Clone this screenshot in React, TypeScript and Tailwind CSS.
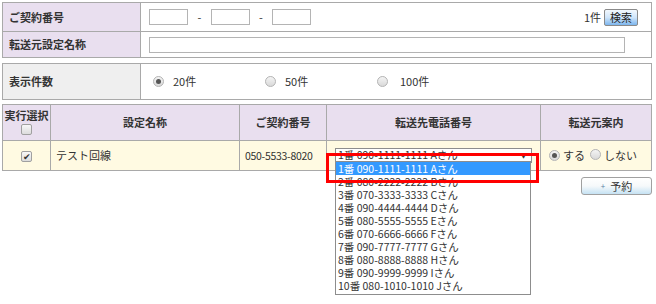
import React from 'react';

const phones = [
  '1番 090-1111-1111 Aさん',
  '2番 080-2222-2222 Bさん',
  '3番 070-3333-3333 Cさん',
  '4番 090-4444-4444 Dさん',
  '5番 080-5555-5555 Eさん',
  '6番 070-6666-6666 Fさん',
  '7番 090-7777-7777 Gさん',
  '8番 080-8888-8888 Hさん',
  '9番 090-9999-9999 Iさん',
  '10番 080-1010-1010 Jさん',
];

function Radio({ checked }: { checked?: boolean }) {
  return (
    <span className="inline-flex items-center justify-center w-[11px] h-[11px] rounded-full border border-[#b5b5b5] bg-gradient-to-b from-[#f4f4f4] to-[#d9d9d9]">
      {checked && <span className="w-[5px] h-[5px] rounded-full bg-[#555]" />}
    </span>
  );
}

function Check({ checked }: { checked?: boolean }) {
  return (
    <span className="inline-flex items-center justify-center w-[11px] h-[11px] rounded-[2px] border border-[#a0a0a0] bg-gradient-to-b from-[#f8f8f8] to-[#dcdcdc] text-[9px] leading-none text-[#333]">
      {checked && '✔'}
    </span>
  );
}

const box = 'h-[16px] border border-[#b4b4b4] bg-white';

export default function App() {
  return (
    <div className="relative w-[656px] h-[304px] bg-white pt-[2px] pl-[2px] text-[11px] text-[#333] font-['Noto_Sans_CJK_JP',sans-serif] overflow-hidden">
      <table className="w-[650px] border-collapse border border-[#a9a9a9]">
        <tbody>
          <tr className="h-[29px]">
            <th className="w-[138px] bg-[#e9dfef] border border-[#a9a9a9] text-left pl-[6px] font-bold">ご契約番号</th>
            <td className="border border-[#a9a9a9] pl-[8px] pr-[13px]">
              <div className="flex items-center">
                <div className={`${box} w-[39px]`} />
                <span className="w-[23px] text-center">-</span>
                <div className={`${box} w-[39px]`} />
                <span className="w-[22px] text-center">-</span>
                <div className={`${box} w-[39px]`} />
                <span className="ml-auto mr-[3px]">1件</span>
                <button className="h-[17px] w-[34px] rounded-[2px] border border-[#8a8a8a] bg-gradient-to-b from-[#f2f8fd] via-[#cfe5fa] to-[#7db6ee] text-[11px] leading-none text-[#222]">検索</button>
              </div>
            </td>
          </tr>
          <tr className="h-[26px]">
            <th className="bg-[#e9dfef] border border-[#a9a9a9] text-left pl-[6px] font-bold">転送元設定名称</th>
            <td className="border border-[#a9a9a9] pl-[8px]">
              <div className={`${box} w-[476px]`} />
            </td>
          </tr>
        </tbody>
      </table>

      <table className="mt-[5px] w-[650px] border-collapse border border-[#a9a9a9]">
        <tbody>
          <tr className="h-[36px]">
            <th className="w-[138px] bg-[#efefef] border border-[#a9a9a9] text-left pl-[6px] font-bold">表示件数</th>
            <td className="border border-[#a9a9a9] pl-[12px]">
              <div className="flex items-center">
                <span className="flex items-center w-[112px]"><Radio checked /><span className="ml-[9px]">20件</span></span>
                <span className="flex items-center w-[112px]"><Radio /><span className="ml-[9px]">50件</span></span>
                <span className="flex items-center"><Radio /><span className="ml-[12px]">100件</span></span>
              </div>
            </td>
          </tr>
        </tbody>
      </table>

      <table className="mt-[4px] w-[650px] border-collapse border border-[#a9a9a9]">
        <tbody>
          <tr className="h-[36px] bg-[#e9dfef] font-bold">
            <th className="w-[48px] border border-[#a9a9a9] leading-[14px] align-top pt-[3px]">
              <div>実行選択</div>
              <div className="mt-[1px]"><Check /></div>
            </th>
            <th className="w-[189px] border border-[#a9a9a9]">設定名称</th>
            <th className="w-[87px] border border-[#a9a9a9]">ご契約番号</th>
            <th className="w-[214px] border border-[#a9a9a9]">転送先電話番号</th>
            <th className="border border-[#a9a9a9]">転送元案内</th>
          </tr>
          <tr className="h-[30px] bg-[#fffae2]">
            <td className="border border-[#a9a9a9] text-center"><Check checked /></td>
            <td className="border border-[#a9a9a9] pl-[5px]">テスト回線</td>
            <td className="border border-[#a9a9a9] pl-[5px] text-[10.5px] tracking-[-0.3px]">050-5533-8020</td>
            <td className="border border-[#a9a9a9] pl-[8px]">
              <div className="flex items-center h-[15px] w-[197px] border border-[#8d8d8d] bg-white pl-[2px] pr-[4px] text-[10.5px] leading-none">
                <span>1番 090-1111-1111 Aさん</span>
                <span className="ml-auto text-[7px]">▼</span>
              </div>
            </td>
            <td className="border border-[#a9a9a9] pl-[8px]">
              <div className="flex items-center">
                <Radio checked /><span className="ml-[3px]">する</span>
                <span className="ml-[5px]"><Radio /></span><span className="ml-[3px]">しない</span>
              </div>
            </td>
          </tr>
        </tbody>
      </table>

      <div className="flex justify-end mt-[6px] w-[650px]">
        <button className="flex items-center justify-center gap-[5px] h-[18px] w-[71px] rounded-[3px] border border-[#a0a0a0] bg-gradient-to-b from-white via-[#f6f9fb] to-[#c5e2f3] text-[11px] leading-none text-[#333]">
          <span className="text-[8px] text-[#5b7fa6]">+</span>
          <span>予約</span>
        </button>
      </div>

      <div className="absolute left-[335px] top-[161px] w-[196px] border border-[#8d8d8d] bg-white pb-[2px] text-[10.5px] leading-[13px]">
        {phones.map((p, i) => (
          <div key={p} className={`h-[13px] pl-[2px] ${i === 0 ? 'bg-[#3399ff] text-white' : ''}`}>{p}</div>
        ))}
      </div>

      <div className="absolute left-[326px] top-[153px] w-[213px] h-[30px] border-[3px] border-[#ff0000]" />
    </div>
  );
}
